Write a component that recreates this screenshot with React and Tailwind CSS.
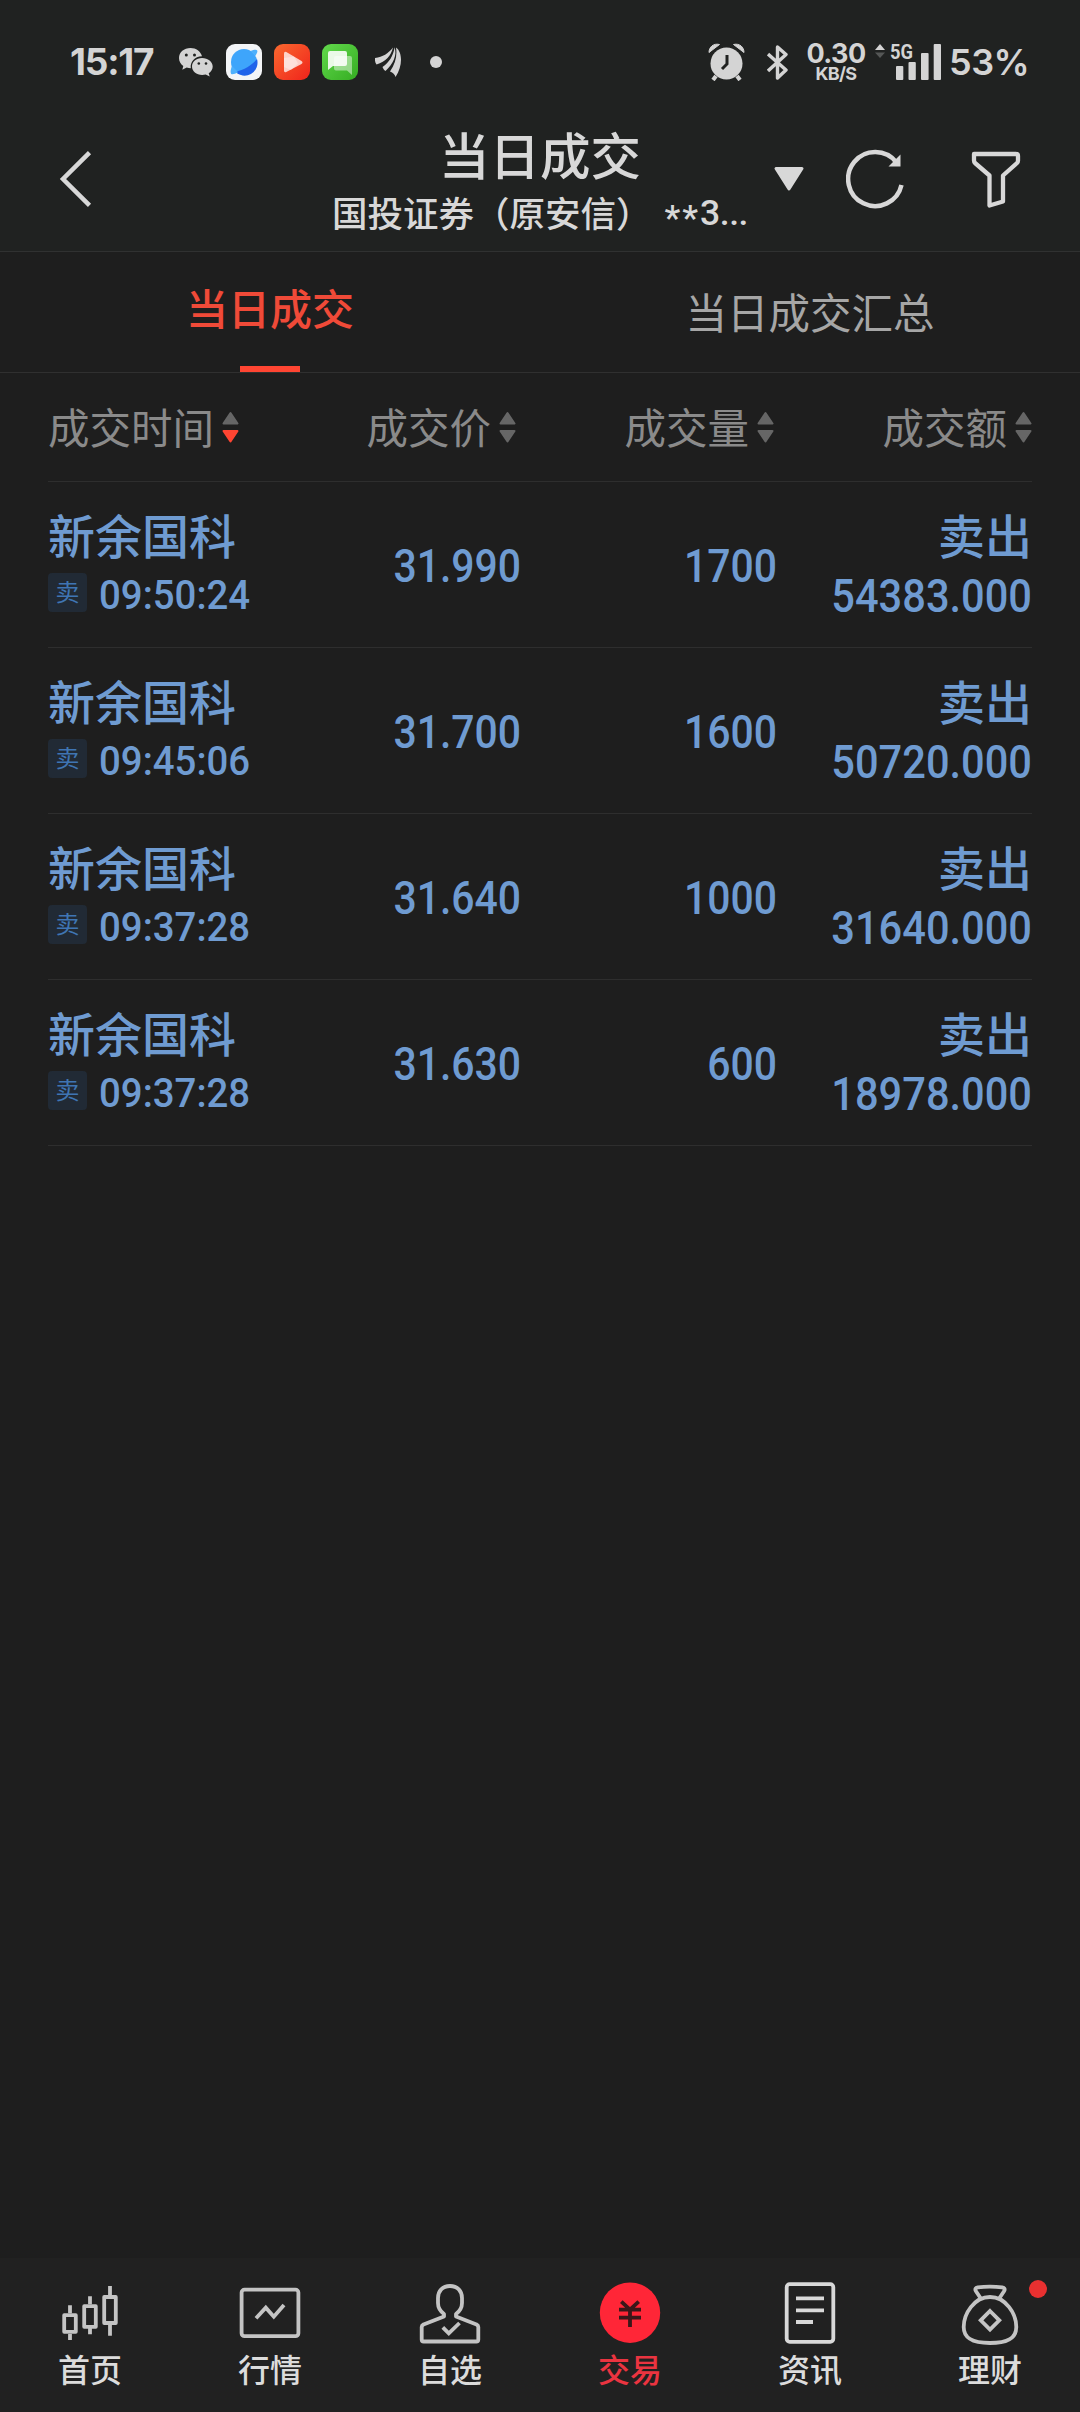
import clsx from "clsx";

const columns = [
  { label: "成交时间", sort: "desc" },
  { label: "成交价" },
  { label: "成交量" },
  { label: "成交额" },
];

const deals = [
  { id: 1, name: "新余国科", time: "09:50:24", price: "31.990", qty: "1700", amount: "54383.000" },
  { id: 2, name: "新余国科", time: "09:45:06", price: "31.700", qty: "1600", amount: "50720.000" },
  { id: 3, name: "新余国科", time: "09:37:28", price: "31.640", qty: "1000", amount: "31640.000" },
  { id: 4, name: "新余国科", time: "09:37:28", price: "31.630", qty: "600", amount: "18978.000" },
];

/* STATUS BAR ICONS */
const WechatIcon = () => (
  <svg width="34" height="29" viewBox="0 0 34 29" fill="#d4d4d4">
    <path d="M11.5 0C5 0 0 4.3 0 10c0 3.4 1.7 6 4.3 8l-1 3.8 4.4-2.2c1.400.4 2.700.6 4.100.6C11 14 15.600 8.300 23 8.300 21.800 3.300 17 0 11.500 0z" />
    <path d="M23 10c-5.800 0-10 3.700-10 8.500S17.400 27 23.200 27c1.200 0 2.400-.2 3.500-.5l4 2-1-3.200c2.500-1.700 4-4.100 4-6.800C33.700 13.700 29 10 23 10z" />
    <circle cx="7.300" cy="7" r="1.500" fill="#202221" />
    <circle cx="15.500" cy="7" r="1.500" fill="#202221" />
    <circle cx="19.800" cy="15.500" r="1.300" fill="#202221" />
    <circle cx="27" cy="15.500" r="1.300" fill="#202221" />
  </svg>
);

const BrowserIcon = () => (
  <svg width="36" height="36" viewBox="0 0 36 36">
    <rect width="36" height="36" rx="9" fill="#f3f5f7" />
    <circle cx="18" cy="18" r="13" fill="#3ea5fb" />
    <path d="M31 15a13 13 0 0 1-22 12.500C19 26 27 20 31 15z" fill="#1f63ea" />
    <path d="M24.500 7c3.500-1.500 6.200-1.600 6.700-.6.600 1.200-.2 3.300-1.900 5.600zM6 22c-1.500 3.500-1.800 7-.8 8 1.300.8 4-.2 7-1.700z" fill="#4db0fc" />
  </svg>
);

const VideoIcon = () => (
  <svg width="36" height="36" viewBox="0 0 36 36">
    <defs>
      <linearGradient id="video" x1="0" y1="0" x2="1" y2="1">
        <stop offset="0" stopColor="#f9692f" />
        <stop offset="1" stopColor="#f0231b" />
      </linearGradient>
    </defs>
    <rect width="36" height="36" rx="9" fill="url(#video)" />
    <path d="M10 9.500v17q0 2.500 2.300 1.400L27.500 20q2-1.500 0-3L12.300 8q-2.300-1-2.300 1.500z" fill="#fff" fillOpacity=".75" />
    <path d="M10 14l10-1.500 4 7-7 6.500-7-3z" fill="#fff" fillOpacity=".35" />
  </svg>
);

const MessageIcon = () => (
  <svg width="36" height="36" viewBox="0 0 36 36">
    <defs>
      <linearGradient id="message" x1="0" y1="0" x2="1" y2="1">
        <stop offset="0" stopColor="#62d94c" />
        <stop offset="1" stopColor="#35ad22" />
      </linearGradient>
    </defs>
    <rect width="36" height="36" rx="9" fill="url(#message)" />
    <path d="M14 12h14q2 0 2 2v17l-5-4.500H14q-2 0-2-2V14q0-2 2-2z" fill="#fff" fillOpacity=".45" />
    <path d="M8 7h15q2 0 2 2v11q0 2-2 2H11l-5 4V9q0-2 2-2z" fill="#fff" fillOpacity=".88" />
  </svg>
);

const FeatherIcon = () => (
  <svg width="27" height="30" viewBox="0 0 27 30" fill="#d4d4d4">
    <path d="M0 11C8 10 13 6.500 18 0.500 16 9 11 14.500 1.500 17.500 0 15.500-.3 13 0 11z" />
    <path d="M7.500 20C14 15.500 18.500 9 19.500.3c3 7.500-1.500 17-9 23.700-1.500-1-2.500-2.500-3-4z" />
    <path d="M15 24.500c5.500-8 7.300-16 6-24C27.500 5 28 19 20.500 30q-1-4-5.500-5.500z" />
  </svg>
);

const AlarmIcon = () => (
  <svg width="37" height="38" viewBox="0 0 37 38">
    <circle cx="18.500" cy="20.500" r="16" fill="#d4d4d4" />
    <path d="M8 33l-3 4M29 33l3 4" stroke="#d4d4d4" strokeWidth="4" />
    <path d="M1 9.500C1 4 5.500 0 11.500 1.500zM36 9.500C36 4 31.500 0 25.500 1.500z" fill="#d4d4d4" stroke="#d4d4d4" strokeWidth="1" />
    <path d="M19 12v9l-5 5" stroke="#202221" strokeWidth="3" fill="none" />
  </svg>
);

const BluetoothIcon = () => (
  <svg width="22" height="37" viewBox="0 0 22 37" fill="none" stroke="#d4d4d4" strokeWidth="3.400">
    <path d="M1 10l18 16-8.500 8V3l8.500 7.500L1 27" strokeLinejoin="round" />
  </svg>
);

const SignalIcon = () => (
  <svg width="66" height="46" viewBox="0 -4 66 46" fill="#d4d4d4">
    <path d="M5 1l5 6H0z" />
    <path d="M5 15l5-5.500H0z" fill="#555756" />
    <rect x="21" y="23" width="7.300" height="14" rx="1" />
    <rect x="33.500" y="19" width="7.300" height="18" rx="1" />
    <rect x="46" y="10" width="7.600" height="27" rx="1" />
    <rect x="58.700" y="1" width="7.300" height="36" rx="1" />
    <text
      x="15"
      y="15.500"
      textLength="23"
      lengthAdjust="spacingAndGlyphs"
      className="font-['Roboto',sans-serif] text-[21px] font-bold"
    >
      5G
    </text>
  </svg>
);

/* TAB BAR ICONS */
const TabIcon = ({ color = "#c4c4c4", children }) => (
  <svg
    width="64"
    height="68"
    viewBox="0 0 64 68"
    fill="none"
    stroke={color}
    strokeWidth="3.800"
    strokeLinejoin="round"
  >
    {children}
  </svg>
);

const HomeIcon = () => (
  <TabIcon>
    <rect x="6.200" y="35.200" width="11.600" height="16.600" />
    <rect x="26.200" y="26.200" width="11.600" height="20.600" />
    <rect x="46.200" y="17" width="11.600" height="26" />
    <path d="M12 25.300v8M12 54v6M32 16.300v8M32 48v6.300M52 6v9M52 45v10.700" />
  </TabIcon>
);

const MarketIcon = () => (
  <TabIcon>
    <rect x="3.600" y="9.600" width="56.800" height="46.600" rx="3" />
    <path d="M18 38.300l9.800-10.600 8 9L46 25" strokeLinejoin="miter" />
  </TabIcon>
);

const WatchIcon = () => (
  <TabIcon>
    <path d="M32 6c-7.500 0-12 5-12 12v5c0 4.500 2 8 6 11v2.500L5.500 44.500Q3.700 45.500 3.700 47v12.500q0 2 2 2h52.600q2 0 2-2V47q0-1.500-1.800-2.500L38 36.500V34c4-3 6-6.500 6-11v-5c0-7-4.500-12-12-12z" />
    <path d="M24.800 47.300l6 6L41.500 43" strokeLinejoin="miter" />
  </TabIcon>
);

const TradeIcon = () => (
  <TabIcon color="#3a1719">
    <circle cx="32" cy="32.700" r="30.200" fill="#ff2637" stroke="none" />
    <path d="M23.300 21.700l8.700 8 8.700-8M21 29.700h22M21 37.700h22M32 29v18" />
  </TabIcon>
);

const NewsIcon = () => (
  <TabIcon color="#d8d8d8">
    <rect x="8.700" y="4.200" width="46.600" height="57.600" rx="3" />
    <path d="M18 18.300h28M18 30.300h28M18 42h17" />
  </TabIcon>
);

const WealthIcon = () => (
  <TabIcon>
    <path d="M22.500 18l-4.700-7q-1.500-3 2-3.700 12-1.500 24.400 0 3.500.7 2 3.700L41.500 18" />
    <path d="M32 17C16 17 5.700 34 5.700 47 5.700 58 14 63 32 63s26.300-5 26.300-16C58.300 34 48 17 32 17z" />
    <path d="M32 31l9.300 9.300-9.300 9.300-9.300-9.300z" strokeLinejoin="miter" />
  </TabIcon>
);

const tabs = [
  { label: "首页", Icon: HomeIcon },
  { label: "行情", Icon: MarketIcon },
  { label: "自选", Icon: WatchIcon },
  { label: "交易", Icon: TradeIcon, active: true },
  { label: "资讯", Icon: NewsIcon },
  { label: "理财", Icon: WealthIcon, dot: true },
];

const StatusBar = () => (
  <div className="flex h-[127px] items-center pr-[53px] pb-[3px] pl-[70px] font-['Inter',sans-serif] text-[#d4d4d4]">
    <span className="w-[109px] text-[37px] font-bold tracking-[-1.2px]">15:17</span>
    <WechatIcon />
    <div className="ml-[13px] flex gap-3">
      <BrowserIcon />
      <VideoIcon />
      <MessageIcon />
    </div>
    <div className="ml-[17px]">
      <FeatherIcon />
    </div>
    <div className="ml-[28px] size-3 rounded-full bg-[#d4d4d4]" />

    <div className="ml-auto flex items-center">
      <AlarmIcon />
      <div className="ml-[22px]">
        <BluetoothIcon />
      </div>
      <div className="ml-[17px] flex w-[60px] flex-col items-center font-bold">
        <span className="text-[27px] leading-[23px] tracking-[-0.6px]">0.30</span>
        <span className="text-[18px] leading-[17px] tracking-[-0.7px]">KB/S</span>
      </div>
      <div className="ml-[9px]">
        <SignalIcon />
      </div>
      <span className="ml-[8px] w-[78px] text-[36px] font-semibold tracking-[-0.5px]">53%</span>
    </div>
  </div>
);

const Header = () => (
  <header className="border-b border-[#303131] bg-[#202221]">
    <StatusBar />
    <div className="flex h-[124px] text-[#d8d8d8]">
      <div className="flex w-[331px] items-center pb-[20px] pl-[59px]">
        <svg width="34" height="58" viewBox="0 0 34 58" fill="none" stroke="currentColor" strokeWidth="4.500">
          <path d="M30.500 2.700L4 29l26.500 26.300" />
        </svg>
      </div>

      <div className="flex w-[418px] flex-col items-center">
        <h1 className="text-[50.500px] leading-[53px] font-medium">当日成交</h1>
        <p className="flex text-[35.500px] leading-[64px] font-medium whitespace-nowrap">
          国投证券（原安信）
          <span className="relative top-[6px] ml-[13px] font-['Roboto',sans-serif] tracking-[2px]">**</span>
          <span className="relative top-[1px] font-['Roboto',sans-serif] tracking-[-0.4px]">3...</span>
        </p>
      </div>

      <div className="flex items-center pb-[20px] pl-[24px]">
        <svg width="32" height="26" viewBox="0 0 32 26" fill="currentColor" stroke="currentColor" strokeWidth="3">
          <path d="M3 2.500h26L16 23z" strokeLinejoin="round" />
        </svg>
        <svg className="ml-[41px]" width="60" height="60" viewBox="0 0 60 60" fill="none" stroke="currentColor" strokeWidth="4.500">
          <path d="M55.500 36A27 27 0 1 1 50.500 13.500" />
          <path d="M54.500 5.500v12h-12z" fill="currentColor" stroke="none" />
        </svg>
        <svg className="ml-[63px]" width="52" height="58" viewBox="0 0 52 58" fill="none" stroke="currentColor" strokeWidth="4.300">
          <path d="M5 4h42q2 0 2 2v4.500q0 1.500-1 2.500L34 25.500v26L20.500 55.500v-30L6 13q-1-1-1-2.500V6q0-2 0-2z" strokeLinejoin="round" />
        </svg>
      </div>
    </div>
  </header>
);

const SortArrows = ({ sort }) => (
  <svg width="17" height="33" viewBox="0 0 17 33">
    <path d="M8.500 2l7 10.500h-14z" fill="#666" stroke="#666" strokeWidth="2" strokeLinejoin="round" />
    <path
      d="M8.500 30.500l7-10.500h-14z"
      fill={sort === "desc" ? "#ff4532" : "#666"}
      stroke={sort === "desc" ? "#ff4532" : "#666"}
      strokeWidth="2"
      strokeLinejoin="round"
    />
  </svg>
);

const DealRow = ({ deal }) => (
  <div className="grid h-[166px] grid-cols-[210px_263px_256px_255px] border-b border-[#2e2e2e] font-medium text-[#6f9bd1]">
    <div className="pt-[25px]">
      <div className="text-[47px] leading-[54px] whitespace-nowrap">{deal.name}</div>
      <div className="mt-[11px] flex h-[40px] items-center gap-[12px]">
        <span className="flex h-[39px] w-[39px] shrink-0 items-center justify-center rounded bg-[#212a35] pb-[2px] text-[24px] leading-none font-normal text-[#3f75b3]">
          卖
        </span>
        <span className="origin-left scale-x-[.925] pt-[5px] font-['Roboto',sans-serif] text-[41.500px] leading-none">
          {deal.time}
        </span>
      </div>
    </div>
    <div className="origin-right scale-x-[.87] self-center pt-[2px] text-right font-['Roboto',sans-serif] text-[47px] leading-none">
      {deal.price}
    </div>
    <div className="origin-right scale-x-[.87] self-center pt-[2px] text-right font-['Roboto',sans-serif] text-[47px] leading-none">
      {deal.qty}
    </div>
    <div className="pt-[25px] text-right">
      <div className="text-[47px] leading-[54px]">卖出</div>
      <div className="mt-[11px] origin-right scale-x-[.885] font-['Roboto',sans-serif] text-[47px] leading-[48px]">
        {deal.amount}
      </div>
    </div>
  </div>
);

const App = () => {
  return (
    <div className="flex h-[2412px] w-[1080px] flex-col overflow-hidden bg-[#1e1e1e] font-['Noto_Sans_CJK_SC',sans-serif]">
      <Header />

      {/* PAGE TABS */}
      <div className="flex h-[121px] border-b border-[#303030] text-[41.500px]">
        <div className="flex flex-1 flex-col items-center justify-between pt-[25px] text-[42px] font-medium text-[#f04a38]">
          <span className="leading-[60px]">当日成交</span>
          <span className="h-[6px] w-[60px] bg-[#ff4532]" />
        </div>
        <div className="flex flex-1 justify-center pt-[29px] text-[#a6a6a6]">
          <span className="leading-[60px]">当日成交汇总</span>
        </div>
      </div>

      {/* DEAL LIST */}
      <div className="mx-[48px] flex-1">
        <div className="grid h-[109px] grid-cols-[210px_258px_258px_258px] border-b border-[#2e2e2e] text-[41.500px] text-[#8a8a8a]">
          {columns.map((col, i) => (
            <div
              key={col.label}
              className={clsx("flex items-center gap-[8px] whitespace-nowrap", i > 0 && "justify-end")}
            >
              <span className="pb-[2px] leading-[60px]">{col.label}</span>
              <SortArrows sort={col.sort} />
            </div>
          ))}
        </div>
        {deals.map((deal) => (
          <DealRow key={deal.id} deal={deal} />
        ))}
      </div>

      {/* BOTTOM TAB BAR */}
      <nav className="flex h-[154px] bg-[#212121]">
        {tabs.map(({ label, Icon, active, dot }) => (
          <div key={label} className="relative flex w-[180px] flex-col items-center pt-[22px]">
            <Icon />
            <span
              className={clsx(
                "text-[32px] leading-[41px] font-medium",
                active ? "text-[#ea3440]" : "text-[#dcdcdc]"
              )}
            >
              {label}
            </span>
            {dot && <span className="absolute top-[22px] right-[33px] size-[18px] rounded-full bg-[#e93030]" />}
          </div>
        ))}
      </nav>
    </div>
  );
};

export default App;
